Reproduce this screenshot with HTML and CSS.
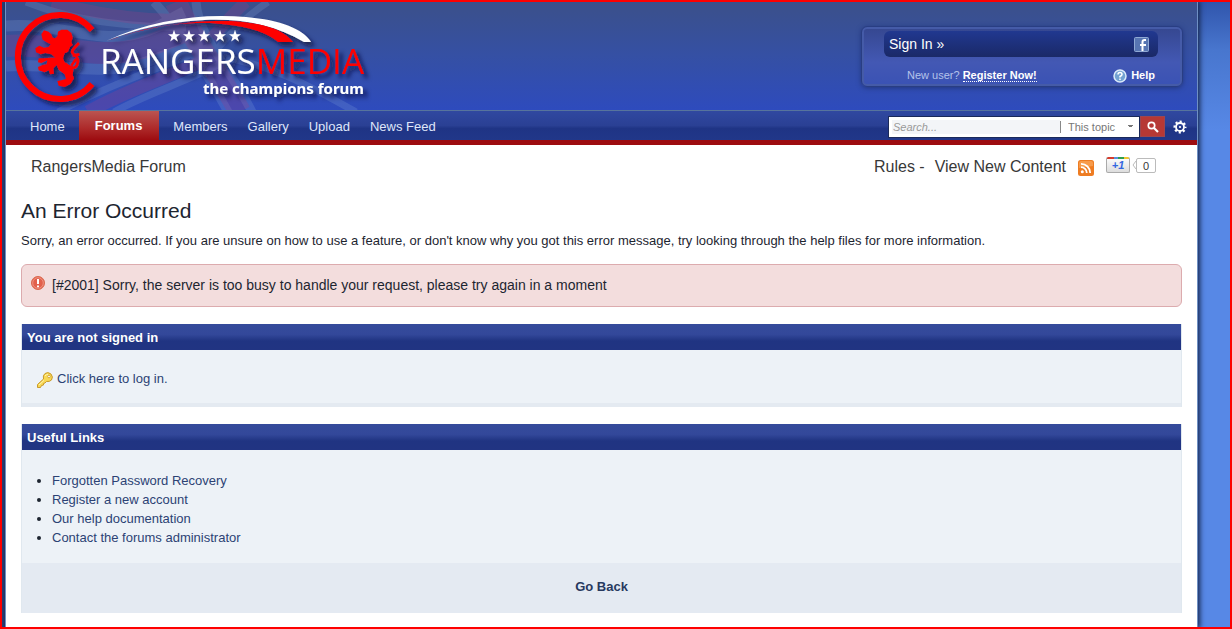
FILE: index.html
```html
<!DOCTYPE html>
<html lang="en">
<head>
<meta charset="utf-8">
<title>RangersMedia Forum</title>
<link rel="stylesheet" href="styles.css">
</head>
<body>
<div class="page">
  <header class="banner">
    <svg class="flag" viewBox="0 0 400 108" width="400" height="108" aria-hidden="true">
      <g fill="none" stroke="#8fb0e0" opacity=".2">
        <path d="M0 24C50 20 90 42 130 32C155 26 165 16 178 10M0 64C50 60 90 76 140 60C170 50 184 44 196 40" stroke-width="11"/>
        <path d="M52 110C100 84 150 68 205 44M108 110C140 92 180 80 214 62" stroke-width="7"/>
        <path d="M148 0C176 30 200 70 222 110M190 0C192 34 226 70 246 110" stroke-width="9"/>
        <path d="M20 0C70 20 120 24 180 26M262 0C240 14 226 30 212 46M220 56C270 64 310 88 350 110" stroke-width="7"/>
      </g>
      <g fill="none" stroke="#a03c84" opacity=".26">
        <path d="M0 44C50 40 90 60 136 46C160 38 176 30 188 25" stroke-width="22"/>
        <path d="M82 110C120 88 166 74 208 54" stroke-width="13"/>
        <path d="M170 0C184 34 210 66 234 110" stroke-width="22"/>
        <path d="M46 0C90 12 130 18 170 18M240 0C228 10 218 22 206 36" stroke-width="12"/>
      </g>
    </svg>
    <a class="logo" href="#">
      <svg viewBox="0 0 370 108" width="370" height="108" role="img" aria-label="RangersMedia, the champions forum">
        <defs>
          <filter id="shade" x="-10%" y="-10%" width="125%" height="130%">
            <feDropShadow dx="4" dy="4" stdDeviation="2" flood-color="#0a1238" flood-opacity=".75"/>
          </filter>
        </defs>
        <g filter="url(#shade)">
          <path d="M86 28A42 42 0 1 0 86 82" fill="none" stroke="#fe0000" stroke-width="6"/>
          <g transform="translate(2 3) scale(.3333)">
            <path fill="#fe0000" d="M100 88L108 76L122 80L130 88L134 98L142 100L148 94L150 80L160 74L178 74L190 84L194 98L190 112L194 120L186 126L180 140L170 145L165 160L170 172L185 182L196 195L194 210L198 220L188 236L170 246L152 242L148 228L160 226L174 222L170 208L152 194L146 180L136 190L138 206L126 208L122 196L110 202L92 196L90 186L104 180L116 178L118 166L100 174L90 172L92 160L108 160L128 158L142 158L130 148L112 144L98 148L84 142L82 130L94 122L108 128L122 126L128 118L116 112L104 104Z"/>
            <path fill="none" stroke="#fe0000" stroke-width="8" d="M172 176Q200 200 208 178Q214 160 200 150Q186 142 198 130L213 114M194 152L214 148M190 182L204 162"/>
          </g>
          <path d="M100 39C145 18 195 11 240 15C275 18 297 27 305 40H298C270 23 235 16 198 18C162 20 130 27 100 39Z" fill="#fff"/>
          <path d="M101 39C144 23 190 18 225 19C258 21 278 28 287 40H272C258 28 235 23 204 21C160 20 128 29 101 39Z" fill="#fe0000"/>
          <g fill="#fff">
            <path id="star" d="M168 28L169.500 32.300H174L170.400 35L171.800 39.500L168 36.800L164.200 39.500L165.600 35L162 32.300H166.500Z"/>
            <use href="#star" x="15"/><use href="#star" x="30"/><use href="#star" x="46"/><use href="#star" x="61"/>
          </g>
          <text class="logo-name" x="94" y="72">RANGERS<tspan class="logo-media">MEDIA</tspan></text>
          <text class="logo-tag" x="197" y="92">the champions forum</text>
        </g>
      </svg>
    </a>
    <div class="user">
      <div class="signin">
        <a href="#">Sign In »</a>
        <a href="#" aria-label="Sign in with Facebook"><svg class="icon" viewBox="0 0 15 15" width="15" height="15"><rect x=".5" y=".5" width="14" height="14" rx="1" fill="#5775b2" stroke="#8fa8d4"/><path d="M12 3H10.500Q8.500 3 8.500 5V14M6 8H12" fill="none" stroke="#fff" stroke-width="2"/></svg></a>
      </div>
      <div class="register">
        <span class="newuser">New user? <a href="#">Register Now!</a></span>
        <a class="help" href="#"><svg class="icon" viewBox="0 0 14 14" width="14" height="14"><circle cx="7" cy="7" r="6" fill="#73a3d2" stroke="#dcebfa" stroke-width="1.500"/><path d="M5 5.500Q5 3.500 7 3.500T9 5.500Q9 6.500 7 7.500V8.500M7 9.500V11" fill="none" stroke="#fff" stroke-width="1.500"/></svg>Help</a>
      </div>
    </div>
  </header>
  <nav class="nav">
    <ul class="tabs">
      <li><a href="#">Home</a></li>
      <li class="active"><a href="#">Forums</a></li>
      <li><a href="#">Members</a></li>
      <li><a href="#">Gallery</a></li>
      <li><a href="#">Upload</a></li>
      <li><a href="#">News Feed</a></li>
    </ul>
    <form class="search">
      <div class="searchbox">
        <input type="search" aria-label="Search" placeholder="Search...">
        <select aria-label="Search in"><option>This topic</option></select>
      </div>
      <button class="go" type="button" aria-label="Search"><svg class="icon" viewBox="0 0 12 12" width="12" height="12"><circle cx="4.500" cy="4.500" r="3.200" fill="none" stroke="#fff" stroke-width="1.700"/><path d="M7 7L11 11" stroke="#fff" stroke-width="2.200"/></svg></button>
      <button class="gear" type="button" aria-label="Advanced search"><svg class="icon" viewBox="0 0 14 14" width="14" height="14"><circle cx="7" cy="7" r="4" fill="none" stroke="#fff" stroke-width="1.800"/><circle cx="7" cy="7" r="5.400" fill="none" stroke="#fff" stroke-width="2.200" stroke-dasharray="2.100 2.140" stroke-dashoffset="1.050"/><circle cx="7" cy="7" r="1.100" fill="#fff"/></svg></button>
    </form>
  </nav>
  <main class="content">
    <div class="crumbs">
      <a href="#">RangersMedia Forum</a>
      <div class="tools">
        <span><a href="#">Rules</a> -</span>
        <a href="#">View New Content</a>
        <a class="rss" href="#" aria-label="RSS feed"><svg class="icon" viewBox="0 0 16 16" width="16" height="16"><rect width="16" height="16" rx="2.500" fill="#ee7c22"/><path d="M1 8V3Q1 1 3 1H13Q15 1 15 3V6Z" fill="#f79b4b"/><circle cx="4.300" cy="11.700" r="1.500" fill="#fff"/><path d="M3 7.200A5.800 5.800 0 0 1 8.800 13M3 3.800A9.200 9.200 0 0 1 12.200 13" fill="none" stroke="#fff" stroke-width="1.800"/></svg></a>
        <div class="plus"><button type="button">+1</button><svg class="tip" viewBox="0 0 4 8" width="4" height="8" aria-hidden="true"><path d="M4 0L1 4L4 8" fill="none" stroke="#bbb"/></svg><span class="count">0</span></div>
      </div>
    </div>
    <h1>An Error Occurred</h1>
    <p class="lead">Sorry, an error occurred. If you are unsure on how to use a feature, or don't know why you got this error message, try looking through the help files for more information.</p>
    <div class="error" role="alert">
      <svg class="icon" viewBox="0 0 14 14" width="14" height="14" aria-hidden="true"><circle cx="7" cy="7" r="6.500" fill="#e2604c" stroke="#d9694f"/><circle cx="7" cy="7" r="5.300" fill="none" stroke="#f1a08f" stroke-width=".8"/><path d="M7 3V8M7 9.500V11.200" stroke="#fff" stroke-width="2"/></svg>
      <p>[#2001] Sorry, the server is too busy to handle your request, please try again in a moment</p>
    </div>
    <section class="block login">
      <h2>You are not signed in</h2>
      <div class="body">
        <a href="#"><svg class="icon" viewBox="0 0 16 16" width="16" height="16" aria-hidden="true"><path fill="#f8d854" stroke="#c99a2b" d="M.500 12.500L6.500 7Q5.500 3.500 8 1.500Q11-.5 14 2Q16.500 5 14.500 8Q12.500 10 9.500 9.500L8 11L6.500 11.500V13L4.500 13.500L3.500 15.500H.500Z"/><path d="M2 13L7 8.300M8 4Q9 2.500 11 2.200" fill="none" stroke="#fff3ae" stroke-width="1"/><circle cx="12" cy="4.500" r="1.300" fill="#fff" stroke="#c99a2b" stroke-width=".8"/></svg>Click here to log in.</a>
      </div>
    </section>
    <section class="block links">
      <h2>Useful Links</h2>
      <ul class="body">
        <li><a href="#">Forgotten Password Recovery</a></li>
        <li><a href="#">Register a new account</a></li>
        <li><a href="#">Our help documentation</a></li>
        <li><a href="#">Contact the forums administrator</a></li>
      </ul>
      <div class="back"><a href="#">Go Back</a></div>
    </section>
  </main>
</div>
</body>
</html>
```
FILE: styles.css
```css
* { box-sizing: border-box; }
body {
  margin: 0;
  min-height: 100vh;
  display: flex;
  padding: 0 32px 0 3px;
  border: 2px solid #fe0000;
  background: linear-gradient(90deg, #2c4379, #2c4379 50%, transparent 50%), linear-gradient(#2f54ab, #4876ce 50px, #5788e6 130px);
  font: 13px/19px "Liberation Sans", Arial, sans-serif;
  color: #1d2530;
}
a { color: inherit; text-decoration: none; }
h1, h2, p, ul { margin: 0; padding: 0; }
.icon { display: block; flex: none; }
.page {
  flex: 1;
  min-width: 0;
  border: solid #6f90c4;
  border-width: 0 1px;
  background: #fff;
  box-shadow: 1px 0 5px 1px #182850;
  clip-path: inset(0 -12px 0 -4px);
}
.banner {
  position: relative;
  display: flex;
  justify-content: space-between;
  align-items: flex-start;
  background: linear-gradient(#3b508a, #3550a4 50%, #2e4bbd);
  border-bottom: 1px solid #57749c;
}
.flag { position: absolute; left: 0; top: 0; }
.logo, .user { position: relative; }
.logo svg { display: block; }
.logo-name { font: 35px "Open Sans", sans-serif; fill: #fff; }
.logo-media { fill: #fe0000; }
.logo-tag { font: bold 15px "Noto Sans", sans-serif; fill: #fff; }
.user {
  width: 322px;
  margin: 24px 14px 0 0;
  padding: 4px 24px 1px 22px;
  border: 1px solid #293e83;
  border-radius: 6px;
  background: linear-gradient(#35478f, #4358b4 60%, #3a52b4);
  box-shadow: 0 1px 5px #23377e, inset 0 0 0 2px #455ba8;
}
.signin {
  display: flex;
  justify-content: space-between;
  align-items: center;
  height: 26px;
  padding: 0 9px 0 5px;
  border-radius: 6px;
  background: linear-gradient(#213890, #1a2967);
  color: #fff;
  font-size: 14px;
}
.register {
  display: flex;
  justify-content: space-between;
  padding: 9px 3px 0 23px;
  color: #b5c3ea;
  font-size: 11px;
}
.register a { color: #fff; font-weight: bold; }
.newuser a { border-bottom: 1px dotted #fff; }
.help { display: flex; align-items: center; gap: 4px; }
.nav {
  display: flex;
  justify-content: space-between;
  background: linear-gradient(#3048a0, #2a4094 50%, #1f3485 60%, #213789);
  border-bottom: 5px solid #9d0c10;
  color: #dfe6fa;
}
.tabs { display: flex; list-style: none; padding-left: 14px; }
.tabs a { display: block; padding: 6px 10px 4px; }
.tabs li { height: 29px; }
.tabs .active {
  margin: 0 4px;
  background: linear-gradient(#bb5450, #ad2a2a 60%, #9d0c10);
  font-weight: bold;
  color: #fff;
}
.tabs .active a { padding: 5px 17px 4px 16px; }
.search { display: flex; align-items: center; padding: 2px 10px 0 0; }
.searchbox { display: flex; align-items: center; height: 22px; padding: 3px; border: 1px solid #1b2a5a; background: #fff; }
.search input {
  width: 168px;
  height: 14px;
  padding: 0 1px;
  border: 0;
  background: #f3f5f8;
  font: 11px/14px "Liberation Sans", Arial, sans-serif;
}
.search input::placeholder { font-style: italic; color: #999; opacity: 1; }
.search select {
  appearance: none;
  width: 76px;
  height: 12px;
  padding: 0 0 0 7px;
  border: 0;
  border-left: 1px solid #888;
  border-radius: 0;
  font: 11px/12px "Liberation Sans", Arial, sans-serif;
  color: #777;
  background:
    linear-gradient(45deg, transparent 50%, #777 50%) 67px 4px / 3px 3px no-repeat,
    linear-gradient(315deg, transparent 50%, #777 50%) 70px 4px / 3px 3px no-repeat;
}
.search button { padding: 0; border: 0; display: grid; place-items: center; }
.search .go { width: 25px; height: 21px; background: #b63835; border: 1px solid #9c4650; }
.search .gear { width: 14px; height: 20px; margin-left: 8px; background: none; }
.content { padding: 0 15px 14px; }
.crumbs, .tools, .plus { display: flex; }
.crumbs {
  justify-content: space-between;
  padding: 12px 26px 0 10px;
  font-size: 16px;
  color: #383838;
}
.tools { gap: 10px; }
.rss { padding: 3px 2px 0; }
.plus { align-items: center; height: 16px; }
.plus button {
  width: 24px;
  height: 16px;
  padding: 2px 0 0;
  border: 1px solid #aaa;
  border-top: 0;
  border-radius: 2px;
  background: linear-gradient(90deg, #d73c2c 33%, #5490e0 33% 50%, #2e9e4e 50% 75%, #f2c42c 75%) top / 100% 2px no-repeat, linear-gradient(#fff, #ddd);
  font: italic bold 11px/13px "Liberation Sans", Arial, sans-serif;
  color: #3366e0;
}
.tip { margin-left: 2px; }
.count {
  width: 20px;
  height: 15px;
  border: 1px solid #bbb;
  border-radius: 2px;
  font-size: 11px;
  line-height: 14px;
  text-align: center;
}
h1 { margin-top: 22px; font-size: 21px; font-weight: normal; line-height: 26px; }
.lead { margin-top: 7px; }
.error {
  display: flex;
  gap: 7px;
  margin-top: 14px;
  padding: 11px 9px;
  border: 1px solid #dcabae;
  border-radius: 6px;
  background: #f3dddd;
  font-size: 14px;
}
.block { margin-top: 17px; border: solid #e0e8ef; border-width: 0 1px; }
.block h2 {
  padding: 4px 5px 3px;
  background: linear-gradient(#354b9b, #33489a 40%, #203482 65%, #213482);
  color: #fff;
  font-size: 13px;
  line-height: 19px;
}
.body { background: #edf2f7; color: #2c4274; }
.login .body { padding: 19px 15px 15px; border-bottom: 4px solid #e4eaf1; }
.login a { display: flex; gap: 4px; }
.login .icon { margin-top: 3px; }
.links .body { padding: 21px 30px 16px; }
.links li::marker { color: #1d2530; }
.back { padding: 14px 0 17px; background: #e4eaf2; text-align: center; font-weight: bold; color: #27395f; }
```
